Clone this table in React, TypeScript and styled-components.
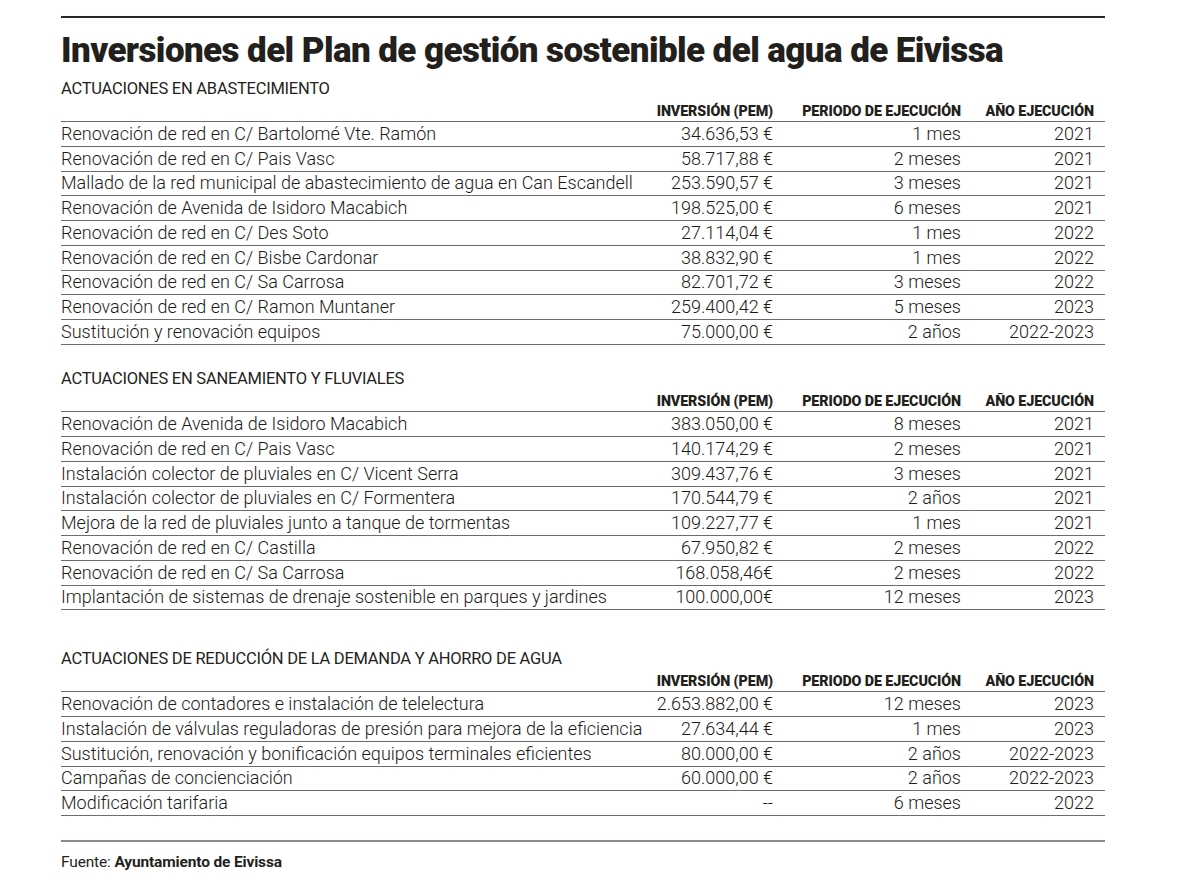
import React from "react";
import styled, { createGlobalStyle } from "styled-components";

const Global = createGlobalStyle`
  html, body { margin: 0; padding: 0; background: #ffffff; }
  body { font-family: Roboto, "Noto Sans", sans-serif; color: #231f1c; }
`;

const Page = styled.div`
  width: 1044px;
  padding: 16px 0 20px 61px;
`;

const TopRule = styled.div`
  height: 2px;
  background: #2a2623;
`;

const Title = styled.h1`
  margin: 13px 0 0;
  font-family: Roboto, sans-serif;
  font-weight: 900;
  font-size: 35px;
  line-height: 40px;
  letter-spacing: -0.6px;
  white-space: nowrap;
  color: #231f1c;
`;

const Section = styled.section<{ $gap: number }>`
  margin-top: ${(p) => p.$gap}px;
`;

const SectionTitle = styled.h2`
  margin: 0;
  font-family: Roboto, sans-serif;
  font-weight: 400;
  font-size: 16.5px;
  line-height: 20px;
  letter-spacing: -0.25px;
  color: #231f1c;
`;

const Grid = styled.div`
  display: grid;
  grid-template-columns: 1fr 120px 188px 133px;
  padding-right: 11px;
  box-sizing: border-box;
  border-bottom: 1px solid #6f6b68;
`;

const HeadRow = styled(Grid)`
  padding-top: 4px;
  padding-bottom: 2px;
  align-items: end;
`;

const HeadCell = styled.div`
  text-align: right;
  font-family: Roboto, sans-serif;
  font-weight: 900;
  font-size: 14.3px;
  line-height: 16px;
  letter-spacing: -0.1px;
  white-space: nowrap;
  color: #231f1c;
`;

const Row = styled(Grid)`
  height: 24.75px;
  align-items: center;
`;

const Cell = styled.div<{ $right?: boolean }>`
  text-align: ${(p) => (p.$right ? "right" : "left")};
  font-family: Roboto, sans-serif;
  font-weight: 300;
  font-size: 18px;
  line-height: 22px;
  white-space: nowrap;
  min-width: 0;
  color: #1e1a17;
`;

const BottomRule = styled.div`
  margin-top: 24px;
  height: 2px;
  background: #8c8986;
`;

const Source = styled.p`
  margin: 11px 0 0;
  font-family: Roboto, sans-serif;
  font-size: 15.5px;
  line-height: 18px;
  font-weight: 400;
  color: #231f1c;
  letter-spacing: -0.15px;
  & strong { font-weight: 700; }
`;

type Item = [string, string, string, string];

const sections: { title: string; gap: number; rows: Item[] }[] = [
  {
    title: "ACTUACIONES EN ABASTECIMIENTO",
    gap: 8,
    rows: [
      ["Renovación de red en C/ Bartolomé Vte. Ramón", "34.636,53 €", "1 mes", "2021"],
      ["Renovación de red en C/ Pais Vasc", "58.717,88 €", "2 meses", "2021"],
      ["Mallado de la red municipal de abastecimiento de agua en Can Escandell", "253.590,57 €", "3 meses", "2021"],
      ["Renovación de Avenida de Isidoro Macabich", "198.525,00 €", "6 meses", "2021"],
      ["Renovación de red en C/ Des Soto", "27.114,04 €", "1 mes", "2022"],
      ["Renovación de red en C/ Bisbe Cardonar", "38.832,90 €", "1 mes", "2022"],
      ["Renovación de red en C/ Sa Carrosa", "82.701,72 €", "3 meses", "2022"],
      ["Renovación de red en C/ Ramon Muntaner", "259.400,42 €", "5 meses", "2023"],
      ["Sustitución y renovación equipos", "75.000,00 €", "2 años", "2022-2023"],
    ],
  },
  {
    title: "ACTUACIONES EN SANEAMIENTO Y FLUVIALES",
    gap: 24.5,
    rows: [
      ["Renovación de Avenida de Isidoro Macabich", "383.050,00 €", "8 meses", "2021"],
      ["Renovación de red en C/ Pais Vasc", "140.174,29 €", "2 meses", "2021"],
      ["Instalación colector de pluviales en C/ Vicent Serra", "309.437,76 €", "3 meses", "2021"],
      ["Instalación colector de pluviales en C/ Formentera", "170.544,79 €", "2 años", "2021"],
      ["Mejora de la red de pluviales junto a tanque de tormentas", "109.227,77 €", "1 mes", "2021"],
      ["Renovación de red en C/ Castilla", "67.950,82 €", "2 meses", "2022"],
      ["Renovación de red en C/ Sa Carrosa", "168.058,46€", "2 meses", "2022"],
      ["Implantación de sistemas de drenaje sostenible en parques y jardines", "100.000,00€", "12 meses", "2023"],
    ],
  },
  {
    title: "ACTUACIONES DE REDUCCIÓN DE LA DEMANDA Y AHORRO DE AGUA",
    gap: 39,
    rows: [
      ["Renovación de contadores e instalación de telelectura", "2.653.882,00 €", "12 meses", "2023"],
      ["Instalación de válvulas reguladoras de presión para mejora de la eficiencia", "27.634,44 €", "1 mes", "2023"],
      ["Sustitución, renovación y bonificación equipos terminales eficientes", "80.000,00 €", "2 años", "2022-2023"],
      ["Campañas de concienciación", "60.000,00 €", "2 años", "2022-2023"],
      ["Modificación tarifaria", "--", "6 meses", "2022"],
    ],
  },
];

export default function App() {
  return (
    <>
      <Global />
      <Page>
        <TopRule />
        <Title>Inversiones del Plan de gestión sostenible del agua de Eivissa</Title>
        {sections.map((s) => (
          <Section key={s.title} $gap={s.gap}>
            <SectionTitle>{s.title}</SectionTitle>
            <HeadRow>
              <div />
              <HeadCell>INVERSIÓN (PEM)</HeadCell>
              <HeadCell>PERIODO DE EJECUCIÓN</HeadCell>
              <HeadCell>AÑO EJECUCIÓN</HeadCell>
            </HeadRow>
            {s.rows.map((r, i) => (
              <Row key={i}>
                <Cell>{r[0]}</Cell>
                <Cell $right>{r[1]}</Cell>
                <Cell $right>{r[2]}</Cell>
                <Cell $right>{r[3]}</Cell>
              </Row>
            ))}
          </Section>
        ))}
        <BottomRule />
        <Source>
          Fuente: <strong>Ayuntamiento de Eivissa</strong>
        </Source>
      </Page>
    </>
  );
}
